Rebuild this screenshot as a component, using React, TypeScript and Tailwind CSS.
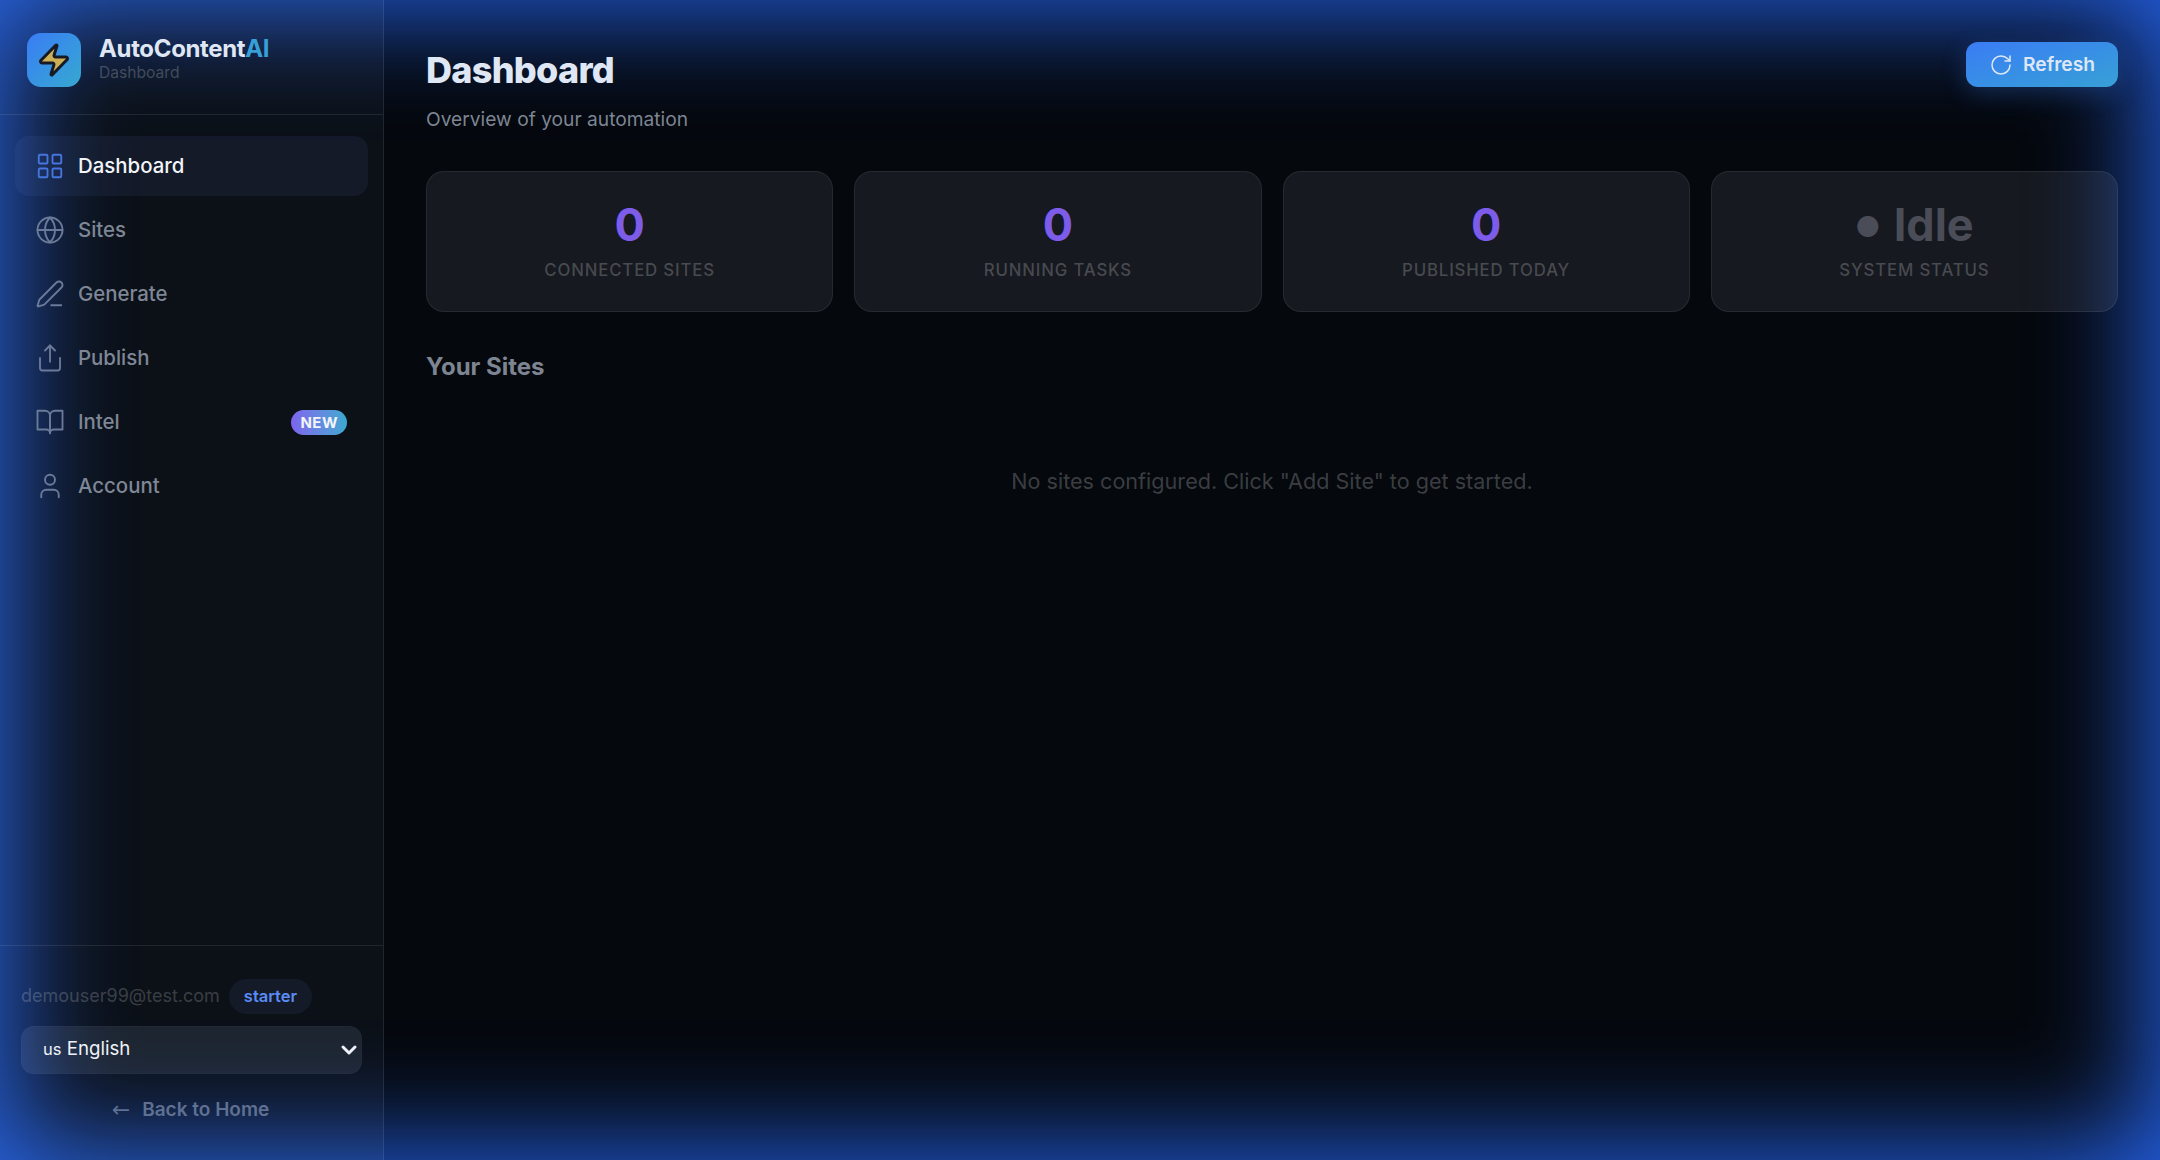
import { ChevronDown, Globe, LayoutGrid, PenLine, RotateCw, Share, User, Zap } from 'lucide-react';

function BookIcon({ size, strokeWidth, color }: { size: number; strokeWidth: number; color: string }) {
  return (
    <svg width={size} height={size} viewBox="0 0 24 24" fill="none" stroke={color} strokeWidth={strokeWidth} strokeLinecap="round" strokeLinejoin="round">
      <path d="M2 3h6a4 4 0 0 1 4 4v14a3 3 0 0 0-3-3H2z" />
      <path d="M22 3h-6a4 4 0 0 0-4 4v14a3 3 0 0 1 3-3h7z" />
    </svg>
  );
}

const NAV_ITEMS = [
  { label: 'Dashboard', icon: LayoutGrid, active: true },
  { label: 'Sites', icon: Globe },
  { label: 'Generate', icon: PenLine },
  { label: 'Publish', icon: Share },
  { label: 'Intel', icon: BookIcon, badge: 'NEW' },
  { label: 'Account', icon: User },
];

const STATS = [
  { value: '0', label: 'Connected Sites' },
  { value: '0', label: 'Running Tasks' },
  { value: '0', label: 'Published Today' },
  { value: 'Idle', label: 'System Status', muted: true },
];

function Sidebar() {
  return (
    <aside className="relative flex h-full w-[384px] shrink-0 flex-col border-r border-white/[0.09] bg-[#a5bbe8]/[0.05]">
      <div className="flex h-[115px] shrink-0 items-center gap-[18px] border-b border-white/[0.09] px-[27px] pt-[5px]">
        <div className="flex h-[54px] w-[54px] items-center justify-center rounded-[14px] bg-gradient-to-br from-[#3b7bf5] to-[#38a8d0]">
          <Zap size={36} strokeWidth={2} fill="#cdb055" color="#151a26" />
        </div>
        <div className="-mt-[3px]">
          <div className="text-[24px] leading-[30px] font-bold tracking-[-0.35px] text-[#dfe7f5]">
            AutoContent<span className="text-[#38a0d8]">AI</span>
          </div>
          <div className="text-[15.6px] leading-[18px] text-white/[0.22]">Dashboard</div>
        </div>
      </div>

      <nav className="flex flex-1 flex-col gap-1 px-[15px] pt-[21px]">
        {NAV_ITEMS.map(item => {
          const Icon = item.icon;
          return (
            <div
              key={item.label}
              className={`flex h-[60px] items-center gap-[13px] rounded-[14px] pr-[21px] pl-[20px] text-[20.4px] font-medium ${
                item.active ? 'bg-[#7f9fff]/[0.07] text-[#f1f5f9]' : 'text-[#7f8796]'
              }`}
            >
              <Icon size={30} strokeWidth={1.5} color={item.active ? '#4675e0' : '#6b7a99'} />
              <span className="flex-1">{item.label}</span>
              {item.badge && (
                <span className="rounded-full bg-gradient-to-r from-[#7c63ee] to-[#38a8d0] px-[9px] py-[2px] text-[15px] leading-[21px] font-bold tracking-[0.5px] text-[#f1f5f9]">
                  {item.badge}
                </span>
              )}
            </div>
          );
        })}
      </nav>

      <div className="border-t border-white/[0.09] px-[21px] pt-[33px] pb-[36px]">
        <div className="flex items-center gap-[9px]">
          <span className="text-[18px] leading-[24px] text-white/[0.2]">demouser99@test.com</span>
          <span className="rounded-full bg-[#7f9fff]/[0.07] px-[15px] py-[6px] text-[16.5px] leading-[23px] font-semibold text-[#5b8cf5]">
            starter
          </span>
        </div>
        <div className="mt-[12px] flex h-[48px] items-center justify-between rounded-[13px] border border-white/[0.02] bg-[#c5d7ff]/[0.1] pl-[21px] text-[18.7px] text-[#eef2f8]">
          <span>
            <span className="text-[16.5px]">us</span> English
          </span>
          <ChevronDown size={24} strokeWidth={3} color="#eef2f8" />
        </div>
        <div className="mt-[22px] flex items-center justify-center gap-[12px] pr-[2px] text-[19px] font-semibold text-[#5f7092]">
          <span className="font-['DejaVu_Sans',sans-serif] text-[22px] leading-[24px] font-normal">←</span>
          <span>Back to Home</span>
        </div>
      </div>
    </aside>
  );
}

export default function App() {
  return (
    <div className="relative flex h-[1160px] w-[2160px] overflow-hidden bg-[#05080d] font-['Inter',sans-serif]">
      <div className="pointer-events-none absolute inset-0 shadow-[inset_0_0_110px_10px_#2563eb]" />

      <Sidebar />

      <main className="relative flex-1 px-[42px] pt-[42px]">
        <div className="flex items-start justify-between">
          <div>
            <h1 className="mt-[1px] text-[36px] leading-[54px] font-extrabold tracking-[-0.72px] text-[#dfe7f5]">Dashboard</h1>
            <p className="mt-[7px] text-[19.2px] leading-[30px] text-[#7d8592]">Overview of your automation</p>
          </div>
          <button className="flex h-[45px] items-center gap-[10px] rounded-[12px] bg-gradient-to-br from-[#3b7bf5] to-[#38a0d5] px-[23px] text-[19.2px] font-semibold text-[#dfe7f5] shadow-[0_6px_24px_rgba(59,130,246,0.25)]">
            <RotateCw size={24} strokeWidth={1.5} />
            Refresh
          </button>
        </div>

        <div className="mt-[37px] grid grid-cols-4 gap-[21px]">
          {STATS.map(stat => (
            <div
              key={stat.label}
              className="flex h-[141px] flex-col items-center rounded-[18px] border border-white/[0.07] bg-[#e0e6ff]/[0.08] pt-[26px]"
            >
              <div className={`flex h-[54px] items-center gap-[13px] text-[45px] leading-[54px] font-bold ${stat.muted ? 'text-[#4a4d57]' : 'text-[#7c5ce8]'}`}>
                {stat.muted && <span className="pt-[3px] text-[28px] leading-[48px]">●</span>}
                {stat.value}
              </div>
              <div className="mt-[5px] text-[16.8px] leading-[27px] font-medium tracking-[0.84px] text-white/[0.22] uppercase">
                {stat.label}
              </div>
            </div>
          ))}
        </div>

        <h2 className="mt-[37px] text-[24px] leading-[36px] font-bold text-[#7d8592]">Your Sites</h2>

        <p className="mt-[80px] text-center text-[21.6px] leading-[32px] text-white/[0.22]">
          No sites configured. Click "Add Site" to get started.
        </p>
      </main>
    </div>
  );
}
